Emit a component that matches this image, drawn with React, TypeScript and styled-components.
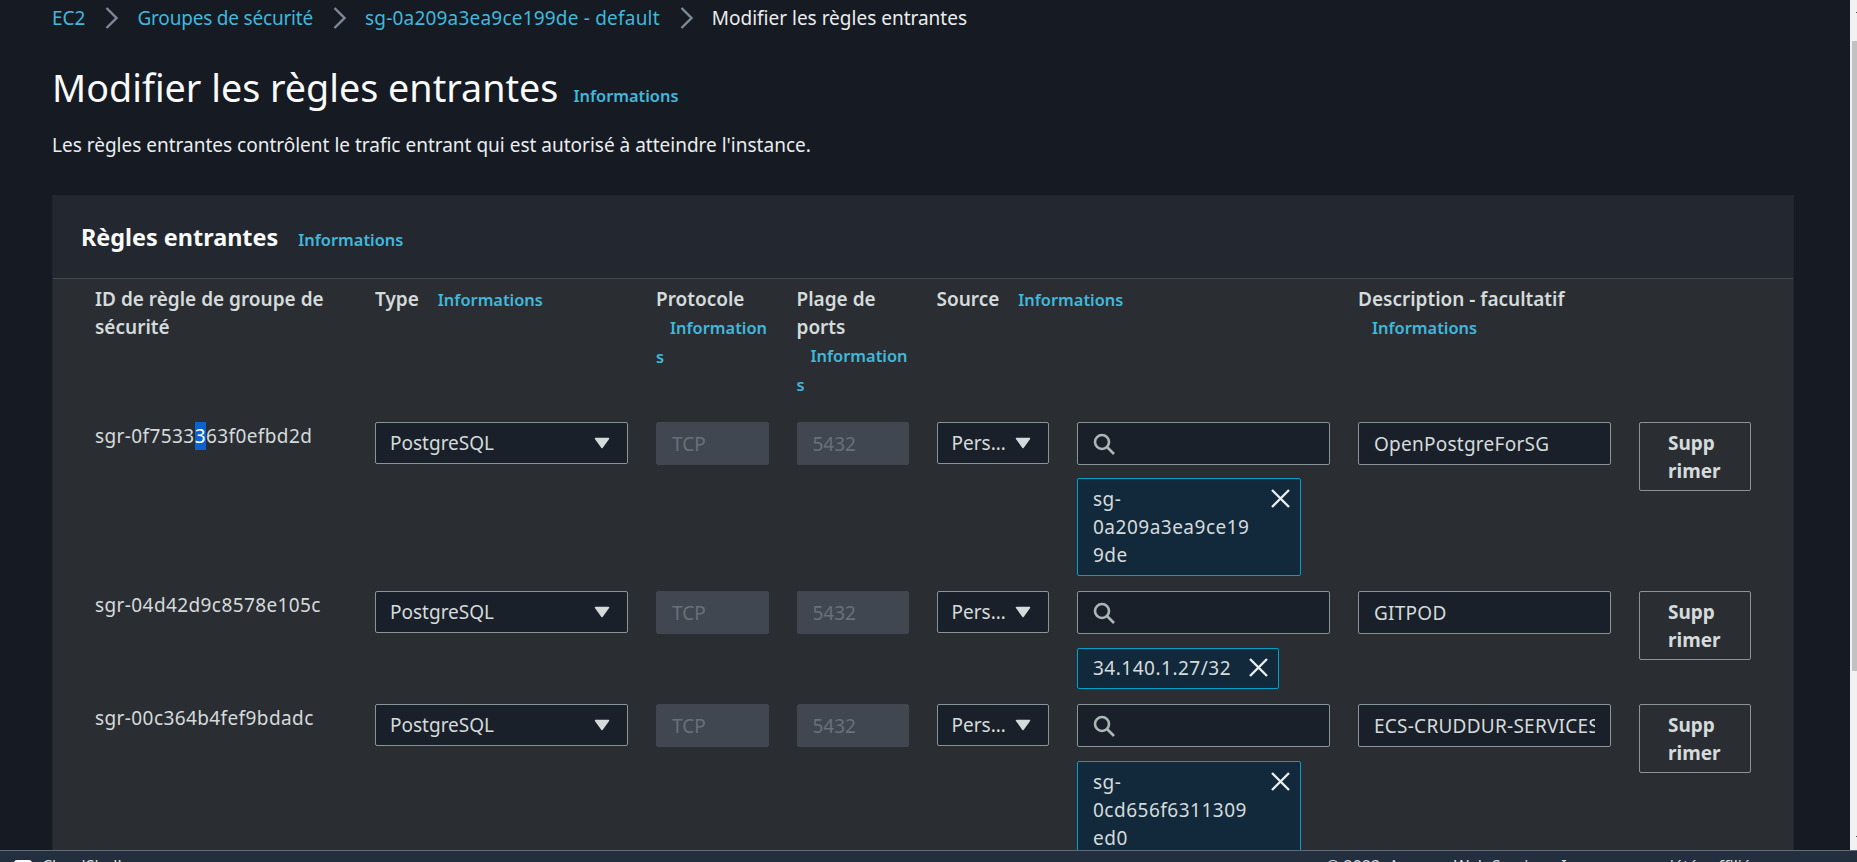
import { ReactElement } from 'react'
import styled, { createGlobalStyle } from 'styled-components'

const GlobalStyle = createGlobalStyle`
  html, body {
    margin: 0;
    height: 100%;
    overflow: hidden;
    background: #161a23;
  }
  body {
    font-family: 'Noto Sans', 'Open Sans', sans-serif;
    font-size: 19px;
    line-height: 28px;
    color: #d5dbdb;
  }
`

const StyledPage = styled.div`
  display: flex;
  height: 862px;
  overflow: hidden;
`

const StyledMain = styled.main`
  flex: 1;
  min-width: 0;
  padding: 4px 56px 0 52px;
`

const StyledScrollbar = styled.div`
  position: relative;
  flex: none;
  width: 7px;
  background: #f1f1f1;
  padding: 41px 0 0 2px;
  box-sizing: border-box;

  &::before,
  &::after {
    content: '';
    position: absolute;
    right: 0;
    width: 1px;
    height: 1px;
    background: #505050;
  }
  &::before {
    top: 12px;
  }
  &::after {
    top: 836px;
  }
`

const StyledThumb = styled.div`
  height: 630px;
  background: #c1c1c1;
`

const StyledBreadcrumbs = styled.nav`
  display: flex;
  align-items: center;
  height: 28px;
`

const StyledCrumbLink = styled.a<{ $tracking?: number }>`
  color: #3fb8dc;
  letter-spacing: ${({ $tracking }) => $tracking ?? 0}px;
`

const StyledCrumbCurrent = styled.span`
  color: #eaeded;
`

const StyledChevron = styled.svg`
  width: 13px;
  height: 22px;
  margin: 0 19px 0 20px;
  fill: none;
  stroke: #7d8998;
  stroke-width: 2.4;
`

const StyledTitleRow = styled.div`
  display: flex;
  align-items: baseline;
  margin-top: 32px;
`

const StyledTitle = styled.h1`
  margin: 0 15px 0 0;
  font-size: 37.7px;
  line-height: 48px;
  font-weight: 400;
  color: #fafafa;
`

const StyledInfo = styled.a`
  color: #3fb8dc;
  font-size: 16.4px;
  font-weight: 600;
`

const StyledLead = styled.p`
  margin: 19px 0 0;
  color: #eaeded;
`

const StyledPanel = styled.section`
  margin-top: 36px;
  background: #2a2e33;
  border: 1px solid #21252c;
  box-sizing: border-box;
  height: 700px;
`

const StyledPanelHeader = styled.header`
  display: flex;
  align-items: baseline;
  height: 83px;
  box-sizing: border-box;
  padding: 25px 28px 0;
  background: #232830;
  border-bottom: 1px solid #414750;
`

const StyledPanelTitle = styled.h2`
  margin: 0 20px 0 0;
  font-size: 23.4px;
  line-height: 32px;
  font-weight: 700;
  color: #fafafa;
`

const StyledGrid = styled.div`
  display: grid;
  grid-template-columns: 252px 253px 112.5px 112px 112.5px 253px 253px 112px;
  column-gap: 28px;
  align-items: start;
  padding-left: 42px;
`

const StyledHeadRow = styled(StyledGrid)`
  padding-top: 6px;
  padding-bottom: 23px;
`

const StyledRow = styled(StyledGrid)`
  padding-bottom: 15.2px;
`

const StyledHead = styled.div<{ $span?: number }>`
  grid-column: span ${({ $span }) => $span ?? 1};
  font-weight: 600;
  color: #d5dbdb;
  overflow-wrap: anywhere;

  ${StyledInfo} {
    margin-left: 14px;
  }
`

const StyledRuleId = styled.div`
  color: #d5dbdb;
  letter-spacing: 0.4px;
`

const StyledMark = styled.span`
  display: inline-block;
  height: 28px;
  background: #0b62d0;
  color: #ffffff;
`

const StyledSelect = styled.div`
  display: flex;
  align-items: center;
  justify-content: space-between;
  height: 42px;
  box-sizing: border-box;
  padding: 0 17px 0 14px;
  background: #1a2029;
  border: 1px solid #879596;
  border-radius: 2px;
  color: #d5dbdb;
`

const StyledSelectText = styled.span`
  min-width: 0;
  overflow: hidden;
  white-space: nowrap;
  text-overflow: ellipsis;
`

const StyledCaret = styled.svg`
  flex: none;
  width: 16px;
  height: 12px;
  margin-left: 4px;
  fill: #d5dbdb;
  stroke: #d5dbdb;
  stroke-width: 1.5;
  stroke-linejoin: round;
`

const StyledInput = styled.input<{ $disabled?: boolean; $tracking?: number }>`
  display: block;
  width: 100%;
  height: 43px;
  box-sizing: border-box;
  padding: 0 15px;
  font: inherit;
  letter-spacing: ${({ $tracking }) => $tracking ?? 0}px;
  outline: none;
  border-radius: 2px;
  background: ${({ $disabled }) => ($disabled ? '#414750' : '#1a2029')};
  border: 1px solid ${({ $disabled }) => ($disabled ? '#414750' : '#879596')};
  color: ${({ $disabled }) => ($disabled ? '#687078' : '#d5dbdb')};
`

const StyledSearch = styled.div`
  display: flex;
  align-items: center;
  height: 43px;
  box-sizing: border-box;
  padding-left: 14px;
  background: #1a2029;
  border: 1px solid #879596;
  border-radius: 2px;
`

const StyledSearchIcon = styled.svg`
  width: 24px;
  height: 24px;
  fill: none;
  stroke: #aab7b8;
  stroke-width: 2.6;
`

const StyledChip = styled.div`
  display: flex;
  align-items: flex-start;
  width: fit-content;
  margin-top: 13.4px;
  box-sizing: border-box;
  padding: 5.8px 10px 5.8px 15px;
  background: #12293b;
  border: 1px solid #00a1c9;
  border-radius: 2px;
  color: #d5dbdb;
`

const StyledChipText = styled.span`
  max-width: 160px;
  letter-spacing: 0.5px;
  overflow-wrap: anywhere;
`

const StyledChipClose = styled.svg`
  flex: none;
  width: 19px;
  height: 19px;
  margin: 4px 0 0 18px;
  fill: none;
  stroke: #eaeded;
  stroke-width: 2.4;
`

const StyledDelete = styled.button`
  display: block;
  width: 100%;
  height: 69px;
  box-sizing: border-box;
  padding: 5px 10px 5px 28px;
  background: transparent;
  border: 1px solid #879596;
  border-radius: 2px;
  font: inherit;
  font-weight: 700;
  text-align: left;
  color: #d5dbdb;
`

const StyledFooter = styled.footer`
  position: fixed;
  left: 0;
  right: 0;
  bottom: 0;
  display: flex;
  justify-content: space-between;
  height: 12px;
  box-sizing: border-box;
  padding: 0 85px 0 14px;
  overflow: hidden;
  background: #232f3e;
  border-top: 1px solid #5f6b7a;
  color: #d5dbdb;
  font-size: 16px;
  line-height: 22px;
`

const StyledFooterLeft = styled.div`
  display: flex;
  gap: 10px;
  padding-top: 4px;
`

const StyledFooterIcon = styled.span`
  width: 14px;
  height: 14px;
  margin-top: 5px;
  border: 2px solid #fafafa;
  border-radius: 3px;
`

const StyledFooterRight = styled.div`
  padding-top: 4px;
  white-space: nowrap;
`

type Rule = {
  id: ReactElement | string
  source: string
  description: string
}

const rules: Rule[] = [
  {
    id: (
      <>
        sgr-0f7533<StyledMark>3</StyledMark>63f0efbd2d
      </>
    ),
    source: 'sg-0a209a3ea9ce199de',
    description: 'OpenPostgreForSG',
  },
  {
    id: 'sgr-04d42d9c8578e105c',
    source: '34.140.1.27/32',
    description: 'GITPOD',
  },
  {
    id: 'sgr-00c364b4fef9bdadc',
    source: 'sg-0cd656f6311309ed0',
    description: 'ECS-CRUDDUR-SERVICES',
  },
]

const Chevron = (): ReactElement => (
  <StyledChevron viewBox="0 0 13 22">
    <path d="M1.5 1l10 10-10 10" />
  </StyledChevron>
)

const Caret = (): ReactElement => (
  <StyledCaret viewBox="0 0 16 12">
    <path d="M1.5 1.5h13L8 10.5z" />
  </StyledCaret>
)

const RuleRow = ({ rule }: { rule: Rule }): ReactElement => (
  <StyledRow>
    <StyledRuleId>{rule.id}</StyledRuleId>
    <StyledSelect>
      <StyledSelectText>PostgreSQL</StyledSelectText>
      <Caret />
    </StyledSelect>
    <StyledInput $disabled readOnly value="TCP" />
    <StyledInput $disabled readOnly value="5432" />
    <StyledSelect>
      <StyledSelectText>Personnalisé</StyledSelectText>
      <Caret />
    </StyledSelect>
    <div>
      <StyledSearch>
        <StyledSearchIcon viewBox="0 0 24 24">
          <circle cx="10" cy="10" r="7" />
          <path d="M15 15l7 7" />
        </StyledSearchIcon>
      </StyledSearch>
      <StyledChip>
        <StyledChipText>{rule.source}</StyledChipText>
        <StyledChipClose viewBox="0 0 19 19">
          <path d="M1 1l17 17M18 1L1 18" />
        </StyledChipClose>
      </StyledChip>
    </div>
    <StyledInput $tracking={0.25} readOnly value={rule.description} />
    <StyledDelete>
      Supp
      <br />
      rimer
    </StyledDelete>
  </StyledRow>
)

export default function App(): ReactElement {
  return (
    <>
      <GlobalStyle />
      <StyledPage>
        <StyledMain>
          <StyledBreadcrumbs>
            <StyledCrumbLink>EC2</StyledCrumbLink>
            <Chevron />
            <StyledCrumbLink $tracking={-0.2}>Groupes de sécurité</StyledCrumbLink>
            <Chevron />
            <StyledCrumbLink $tracking={0.2}>
              sg-0a209a3ea9ce199de - default
            </StyledCrumbLink>
            <Chevron />
            <StyledCrumbCurrent>Modifier les règles entrantes</StyledCrumbCurrent>
          </StyledBreadcrumbs>
          <StyledTitleRow>
            <StyledTitle>Modifier les règles entrantes</StyledTitle>
            <StyledInfo>Informations</StyledInfo>
          </StyledTitleRow>
          <StyledLead>
            Les règles entrantes contrôlent le trafic entrant qui est autorisé à
            atteindre l'instance.
          </StyledLead>
          <StyledPanel>
            <StyledPanelHeader>
              <StyledPanelTitle>Règles entrantes</StyledPanelTitle>
              <StyledInfo>Informations</StyledInfo>
            </StyledPanelHeader>
            <StyledHeadRow>
              <StyledHead>ID de règle de groupe de sécurité</StyledHead>
              <StyledHead>
                Type <StyledInfo>Informations</StyledInfo>
              </StyledHead>
              <StyledHead>
                Protocole <StyledInfo>Informations</StyledInfo>
              </StyledHead>
              <StyledHead>
                Plage de ports <StyledInfo>Informations</StyledInfo>
              </StyledHead>
              <StyledHead $span={2}>
                Source <StyledInfo>Informations</StyledInfo>
              </StyledHead>
              <StyledHead>
                Description - facultatif <StyledInfo>Informations</StyledInfo>
              </StyledHead>
            </StyledHeadRow>
            {rules.map((rule) => (
              <RuleRow key={rule.description} rule={rule} />
            ))}
          </StyledPanel>
        </StyledMain>
        <StyledScrollbar>
          <StyledThumb />
        </StyledScrollbar>
      </StyledPage>
      <StyledFooter>
        <StyledFooterLeft>
          <StyledFooterIcon />
          <span>CloudShell</span>
        </StyledFooterLeft>
        <StyledFooterRight>
          © 2023, Amazon Web Services, Inc. ou ses sociétés affiliées.
        </StyledFooterRight>
      </StyledFooter>
    </>
  )
}
